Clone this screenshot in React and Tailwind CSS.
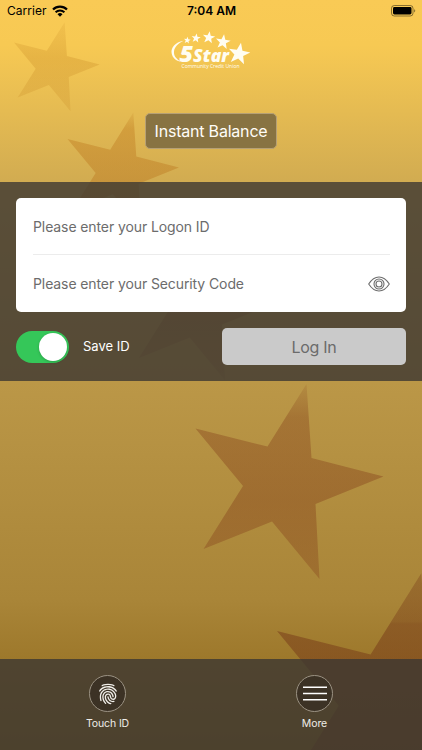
import React from "react";
import { IoFingerPrint } from "react-icons/io5";

const STAR =
  "111,-44.5 116,29.5 188,48 120,75.5 124,150.5 76.5,93 8,120.5 47.5,57.5 0,0 72,18";
const LOGO_STAR = "0,-10 2.5,-3.3 9.5,-3.1 3.9,1.2 5.9,8.1 0,4.1 -5.9,8.1 -3.9,1.2 -9.5,-3.1 -2.5,-3.3";

function Star({ x, y, scale, fill }) {
  return <polygon points={STAR} transform={`translate(${x} ${y}) scale(${scale})`} fill={fill} />;
}

function Backdrop() {
  return (
    <svg className="absolute inset-0 h-full w-full" viewBox="0 0 422 750" aria-hidden="true">
      <defs>
        <linearGradient id="gold" x1="0" y1="0" x2="0" y2="1">
          <stop offset="0" stopColor="#f9ca55" />
          <stop offset="0.06" stopColor="#f7c953" />
          <stop offset="0.24" stopColor="#d2ac51" />
          <stop offset="0.51" stopColor="#bb9747" />
          <stop offset="0.8" stopColor="#a98538" />
          <stop offset="0.88" stopColor="#9d782b" />
          <stop offset="1" stopColor="#8c6a1c" />
        </linearGradient>
        <linearGradient id="fade1" x1="0" y1="0" x2="0" y2="1">
          <stop offset="0" stopColor="#c48420" stopOpacity="0.13" />
          <stop offset="0.4" stopColor="#c48420" stopOpacity="0.28" />
          <stop offset="1" stopColor="#c48420" stopOpacity="0.2" />
        </linearGradient>
        <linearGradient id="fade2" x1="0" y1="0" x2="0" y2="1">
          <stop offset="0" stopColor="#c07c20" stopOpacity="0.14" />
          <stop offset="0.14" stopColor="#c07c20" stopOpacity="0.42" />
          <stop offset="1" stopColor="#b87420" stopOpacity="0.46" />
        </linearGradient>
        <linearGradient id="fade3" x1="0" y1="0" x2="0" y2="1">
          <stop offset="0" stopColor="#823c19" stopOpacity="0" />
          <stop offset="0.4" stopColor="#823c19" stopOpacity="0.12" />
          <stop offset="0.6" stopColor="#823c19" stopOpacity="0.26" />
          <stop offset="1" stopColor="#823c19" stopOpacity="0.14" />
        </linearGradient>
        <linearGradient id="fade4" x1="0" y1="0" x2="0" y2="1">
          <stop offset="0" stopColor="#823c19" stopOpacity="0.12" />
          <stop offset="0.17" stopColor="#823c19" stopOpacity="0.36" />
          <stop offset="0.6" stopColor="#823c19" stopOpacity="0.4" />
          <stop offset="1" stopColor="#823c19" stopOpacity="0.32" />
        </linearGradient>
        <linearGradient id="fade5" x1="0" y1="0" x2="0" y2="1">
          <stop offset="0" stopColor="#703015" stopOpacity="0.3" />
          <stop offset="0.19" stopColor="#703015" stopOpacity="0.37" />
          <stop offset="0.2" stopColor="#703015" stopOpacity="0.45" />
          <stop offset="1" stopColor="#703015" stopOpacity="0.45" />
        </linearGradient>
      </defs>
      <rect width="422" height="750" fill="url(#gold)" />
      <Star x="14" y="42.5" scale="0.456" fill="url(#fade1)" />
      <Star x="67.5" y="139" scale="0.593" fill="url(#fade2)" />
      <Star x="133" y="268.5" scale="0.742" fill="url(#fade3)" />
      <Star x="195.5" y="428.5" scale="1" fill="url(#fade4)" />
      <Star x="277" y="631" scale="1.3" fill="url(#fade5)" />
    </svg>
  );
}

function Logo() {
  return (
    <svg width="82" height="40" viewBox="170 30 82 40" fill="#fffdf2" className="font-['Open_Sans',sans-serif]">
      <path d="M183.5 40.800C175 42.200 170.800 48 171.600 53C172.300 58 176.500 61.200 180.500 61.600C175.800 58.500 173.600 55.500 174 51.500C174.400 46.800 178.500 43.300 183.500 40.800Z" />
      <polygon points={LOGO_STAR} transform="translate(187.200 40.300) rotate(8) scale(.36)" />
      <polygon points={LOGO_STAR} transform="translate(196 38.200) rotate(8) scale(.48)" />
      <polygon points={LOGO_STAR} transform="translate(208.800 37.600) rotate(8) scale(.65)" />
      <polygon points={LOGO_STAR} transform="translate(223 42) rotate(8) scale(.78)" />
      <polygon points={LOGO_STAR} transform="translate(239 54) rotate(10) scale(1.14)" />
      <text x="179.500" y="62" fontSize="22.500" fontWeight="800" fontStyle="italic" textLength="13.500" lengthAdjust="spacingAndGlyphs">5</text>
      <text x="193" y="62" fontSize="17.500" fontWeight="800" fontStyle="italic" textLength="36" lengthAdjust="spacingAndGlyphs">Star</text>
      <text x="181.500" y="68.300" fontSize="5.800" fontWeight="500" textLength="58" lengthAdjust="spacingAndGlyphs">Community Credit Union</text>
    </svg>
  );
}

function StatusBar() {
  return (
    <div className="flex h-[22px] items-center justify-between pl-[7px] pr-[6px] text-black">
      <div className="flex w-[120px] items-center gap-[5px]">
        <span className="text-[12px] leading-none tracking-[0.05px]">Carrier</span>
        <svg width="16" height="12" viewBox="0 0 16 12">
          <path d="M1 4.500A10 10 0 0 1 15 4.500" fill="none" stroke="currentColor" strokeWidth="2.200" />
          <path d="M3.600 7.300A6.300 6.300 0 0 1 12.400 7.300" fill="none" stroke="currentColor" strokeWidth="2" />
          <path d="M8 11.800L5.500 9.300A3.600 3.600 0 0 1 10.500 9.300Z" fill="currentColor" />
        </svg>
      </div>
      <span className="text-[12px] font-semibold leading-none">7:04 AM</span>
      <div className="flex w-[120px] justify-end">
        <svg width="25" height="12" viewBox="0 0 25 12">
          <rect x=".5" y=".5" width="21.500" height="10.500" rx="2.800" fill="none" stroke="#000" strokeOpacity=".45" />
          <rect x="2" y="2" width="18.500" height="7.500" rx="1.400" />
          <path d="M23.200 4Q25.200 5.750 23.200 7.500Z" fillOpacity=".5" />
        </svg>
      </div>
    </div>
  );
}

function EyeIcon() {
  return (
    <svg width="22" height="16" viewBox="0 0 22 16" fill="none" stroke="#6c6c6c" strokeWidth="1.1">
      <path d="M.7 8C3.600 3.500 6.700 1 11 1S18.400 3.500 21.300 8C18.400 12.500 15.300 15 11 15S3.600 12.500 .7 8Z" />
      <circle cx="11" cy="8" r="5" />
      <circle cx="11" cy="8" r="3" />
    </svg>
  );
}

function MenuIcon() {
  return (
    <svg width="24" height="15" viewBox="0 0 24 15" stroke="#fff" strokeWidth="1.4">
      <path d="M0 1.200H24M0 7.500H24M0 13.800H24" />
    </svg>
  );
}

function NavItem({ label, children }) {
  return (
    <button className="flex flex-1 flex-col items-center gap-[5px] pt-4 text-[#efede8]">
      <span className="flex size-[37px] items-center justify-center rounded-full border border-[#9b9283] bg-[#3c3225]">
        {children}
      </span>
      <span className="text-[10.5px] leading-[14px] tracking-[-0.1px]">{label}</span>
    </button>
  );
}

export default function App() {
  return (
    <div className="relative h-[750px] w-[422px] overflow-hidden font-[Inter,sans-serif]">
      <Backdrop />
      <div className="relative flex h-full flex-col">
        <StatusBar />
        <header className="flex h-[159.5px] flex-col items-center pt-2">
          <Logo />
          <button className="mt-[43px] h-[36px] w-[132px] whitespace-nowrap rounded-[5px] border border-[#b6a075] bg-[#887342] text-[16px] tracking-[-0.2px] text-[#fffdf8]">
            Instant Balance
          </button>
        </header>

        <main className="h-[199.5px] bg-[rgba(60,55,50,0.8)] px-4 pt-[16.5px]">
          <div className="h-[114px] rounded-[5px] bg-white pl-[17px] pr-4 text-[14px] tracking-[-0.1px] text-[#6c6c6c]">
            <div className="flex h-[57px] items-center border-b border-[#ececec]">Please enter your Logon ID</div>
            <div className="flex h-[57px] items-center justify-between">
              <span>Please enter your Security Code</span>
              <EyeIcon />
            </div>
          </div>
          <div className="mt-4 flex items-center">
            <div className="flex h-8 w-[53px] items-center justify-end rounded-full bg-[#35c759] pr-[2px]">
              <span className="size-7 rounded-full bg-white shadow-[0_1px_3px_rgba(0,0,0,0.2)]" />
            </div>
            <span className="ml-[14px] text-[13px] text-white">Save ID</span>
            <button className="ml-auto h-[37px] w-[184px] rounded-[5px] bg-[#cacaca] text-[16px] tracking-[-0.3px] text-[#6b6b6b]">
              Log In
            </button>
          </div>
        </main>

        <footer className="mt-auto flex h-[91px] bg-[rgba(60,55,50,0.8)] px-[4px]">
          <NavItem label="Touch ID">
            <IoFingerPrint size={22} />
          </NavItem>
          <NavItem label="More">
            <MenuIcon />
          </NavItem>
        </footer>
      </div>
    </div>
  );
}
